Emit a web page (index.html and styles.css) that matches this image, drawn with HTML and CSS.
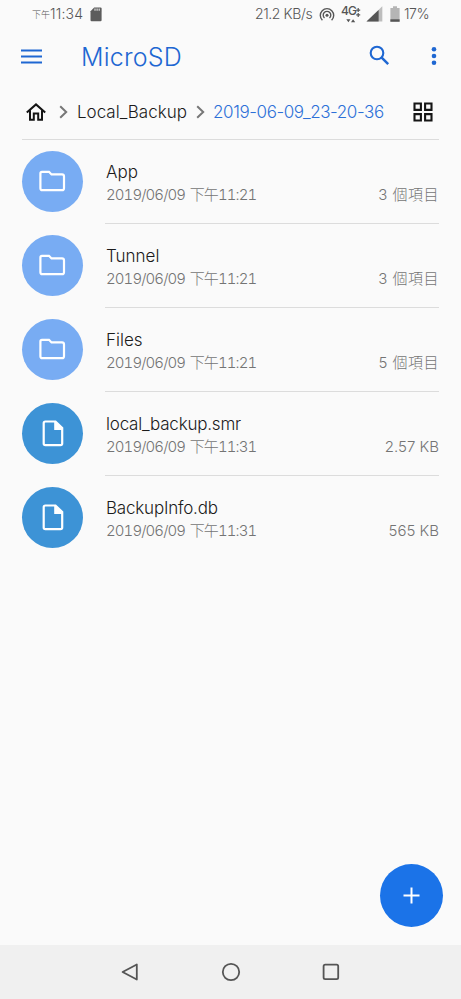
FILE: index.html
```html
<!DOCTYPE html>
<html lang="zh-Hant">
<head>
<meta charset="utf-8">
<title>MicroSD</title>
<link rel="stylesheet" href="styles.css">
</head>
<body>
<div class="status">
  <span class="ampm">下午</span><span class="clock">11:34</span>
  <svg class="sd" width="12" height="15" viewBox="0 0 12 15"><path fill="#5c5c5c" d="M4.2 0.5H10.5Q11.6 .5 11.6 1.6V13Q11.6 14.2 10.5 14.2H1.6Q.5 14.2 .5 13V4.2Z"/><path stroke="#ddd" stroke-width="1.2" d="M5 1.6v2.2M7.1 1.6v2.2M9.2 1.6v2.2"/></svg>
  <span class="speed">21.2 KB/s</span>
  <svg class="cast" width="16" height="15" viewBox="0 0 16 15" fill="none" stroke="#555" stroke-width="1.4"><path d="M3.4 13.2A6.7 6.7 0 1 1 12.6 13.2M5.5 11A3.8 3.8 0 1 1 10.5 11"/><circle cx="8" cy="8.2" r="1.5" fill="#555" stroke="none"/></svg>
  <span class="net"><span class="gen">4G</span><svg width="20" height="18" viewBox="0 0 20 18" fill="#555"><path d="M15.2 4.5h4v1.2h-4zM16.6 3h1.2v4h-1.2zM15.2 9.3h4v1.2h-4zM16.6 8h1.2v4h-1.2zM5.3 14.2h4.2L7.4 17.3zM10 17.3h4.2L12.1 14.2z"/></svg></span>
  <svg class="signal" width="17" height="16" viewBox="0 0 17 16"><path fill="#bdbdbd" d="M16.3 .3V15.5H.5Z"/><path fill="#555" d="M12.6 3.9V15.5H.5Z"/></svg>
  <svg class="battery" width="10" height="16" viewBox="0 0 10 16"><path fill="#b5b5b5" d="M3 .3h4v1.6h2.6v13.8H.4V1.9H3z"/><path fill="#555" d="M.4 13.3h9.2v2.4H.4z"/></svg>
  <span class="pct">17%</span>
</div>
<header class="appbar">
  <svg class="menu" width="21" height="15" viewBox="0 0 21 15"><path stroke="#1e67d2" stroke-width="2" d="M0 1.5h21M0 7.5h21M0 13.5h21"/></svg>
  <h1>MicroSD</h1>
  <svg class="search" width="21" height="21" viewBox="0 0 21 21" fill="none" stroke="#1e67d2" stroke-width="2.1"><circle cx="8" cy="8" r="6.3"/><path d="M12.7 12.7L19.2 19.2" stroke-width="2.5"/></svg>
  <svg class="more" width="6" height="20" viewBox="0 0 6 20" fill="#1e67d2"><circle cx="3" cy="3.2" r="2.3"/><circle cx="3" cy="10" r="2.3"/><circle cx="3" cy="16.8" r="2.3"/></svg>
</header>
<nav class="crumbs">
  <svg class="home" width="20" height="18" viewBox="0 0 20 18" fill="none" stroke="#151515" stroke-width="2"><path d="M.8 9.5L10 1.4L19.2 9.5M4 7.5V16.8H7.8V10.6H12.2V16.8H16V7.5"/></svg>
  <svg class="chev" width="9" height="14" viewBox="0 0 9 14" fill="none" stroke="#777" stroke-width="2"><path d="M1.2 1.2L7.2 7L1.2 12.8"/></svg>
  <span class="crumb">Local_Backup</span>
  <svg class="chev second" width="9" height="14" viewBox="0 0 9 14" fill="none" stroke="#777" stroke-width="2"><path d="M1.2 1.2L7.2 7L1.2 12.8"/></svg>
  <span class="crumb current">2019-06-09_23-20-36</span>
  <svg class="grid" width="20" height="20" viewBox="0 0 20 20" fill="none" stroke="#151515" stroke-width="2.1"><path d="M1.5 1.5h6.4v6.4H1.5zM12.1 1.5h6.4v6.4h-6.4zM1.5 12.1h6.4v6.4H1.5zM12.1 12.1h6.4v6.4h-6.4z"/></svg>
</nav>
<main class="list">
  <div class="row"><div class="disc"><svg width="27" height="22" viewBox="0 0 27 22" fill="none" stroke="#fff" stroke-width="2.2"><path d="M3 1.8H10L12.5 4.4H23Q25 4.4 25 6.4V18.2Q25 20.2 23 20.2H3.4Q1.4 20.2 1.4 18.2V3.4Q1.4 1.8 3 1.8Z"/></svg></div><div class="body"><div class="info"><div class="name">App</div><div class="date">2019/06/09 下午11:21</div></div><div class="size items">3 個項目</div></div></div>
  <div class="row"><div class="disc"><svg width="27" height="22" viewBox="0 0 27 22" fill="none" stroke="#fff" stroke-width="2.2"><path d="M3 1.8H10L12.5 4.4H23Q25 4.4 25 6.4V18.2Q25 20.2 23 20.2H3.4Q1.4 20.2 1.4 18.2V3.4Q1.4 1.8 3 1.8Z"/></svg></div><div class="body"><div class="info"><div class="name">Tunnel</div><div class="date">2019/06/09 下午11:21</div></div><div class="size items">3 個項目</div></div></div>
  <div class="row"><div class="disc"><svg width="27" height="22" viewBox="0 0 27 22" fill="none" stroke="#fff" stroke-width="2.2"><path d="M3 1.8H10L12.5 4.4H23Q25 4.4 25 6.4V18.2Q25 20.2 23 20.2H3.4Q1.4 20.2 1.4 18.2V3.4Q1.4 1.8 3 1.8Z"/></svg></div><div class="body"><div class="info"><div class="name">Files</div><div class="date">2019/06/09 下午11:21</div></div><div class="size items">5 個項目</div></div></div>
  <div class="row"><div class="disc file"><svg width="22" height="27" viewBox="0 0 22 27"><path fill="none" stroke="#fff" stroke-width="2.2" d="M3.4 1.5H13.5L20.2 8V23.5Q20.2 25.2 18.5 25.2H3.4Q1.7 25.2 1.7 23.5V3.2Q1.7 1.5 3.4 1.5Z"/><path fill="#fff" d="M12.2 1.5h1.6L20.5 8v2h-8.3z"/></svg></div><div class="body"><div class="info"><div class="name tight">local_backup.smr</div><div class="date">2019/06/09 下午11:31</div></div><div class="size">2.57 KB</div></div></div>
  <div class="row"><div class="disc file"><svg width="22" height="27" viewBox="0 0 22 27"><path fill="none" stroke="#fff" stroke-width="2.2" d="M3.4 1.5H13.5L20.2 8V23.5Q20.2 25.2 18.5 25.2H3.4Q1.7 25.2 1.7 23.5V3.2Q1.7 1.5 3.4 1.5Z"/><path fill="#fff" d="M12.2 1.5h1.6L20.5 8v2h-8.3z"/></svg></div><div class="body"><div class="info"><div class="name tight">BackupInfo.db</div><div class="date">2019/06/09 下午11:31</div></div><div class="size">565 KB</div></div></div>
</main>
<div class="fab"><svg width="17" height="17" viewBox="0 0 17 17"><path stroke="#fff" stroke-width="2" d="M8.5 .5v16M.5 8.5h16"/></svg></div>
<footer class="navbar">
  <svg width="20" height="20" viewBox="0 0 20 20"><path d="M16.8 2.5V17.5L2.6 10Z"/></svg>
  <svg width="20" height="20" viewBox="0 0 20 20"><circle cx="10" cy="10" r="8.2"/></svg>
  <svg width="20" height="20" viewBox="0 0 20 20"><rect x="2.6" y="2.6" width="14.6" height="14.6" rx="1.6"/></svg>
</footer>
</body>
</html>
```
FILE: styles.css
```css
* { box-sizing: border-box; }
body {
  margin: 0;
  height: 999px;
  display: flex;
  flex-direction: column;
  background: #fafafa;
  color: #1b1b1b;
  font-family: Inter, "Noto Sans CJK TC", sans-serif;
  font-weight: 300;
  overflow: hidden;
  white-space: nowrap;
}
svg { display: block; flex: none; }
.status {
  height: 28px;
  display: flex;
  align-items: center;
  padding-left: 32px;
  font-size: 14px;
  line-height: 20px;
  color: #555;
}
.ampm { width: 18px; font-size: 9px; padding-top: 2px; }
.clock { width: 40px; letter-spacing: 0.2px; }
.speed { margin-left: 153px; width: 64px; letter-spacing: -0.4px; }
.net { display: grid; margin-left: 6px; width: 20px; height: 18px; }
.net > * { grid-area: 1 / 1; }
.gen { font-size: 12px; line-height: 12px; font-weight: 500; letter-spacing: -0.8px; }
.signal { margin-left: 5px; }
.battery { margin-left: 7px; }
.pct { margin-left: 4px; letter-spacing: -0.4px; }
.appbar { height: 56px; display: flex; align-items: center; padding-left: 21px; }
h1 {
  margin: 2px 0 0 39px;
  width: 288px;
  font-size: 25px;
  line-height: 30px;
  font-weight: 300;
  letter-spacing: 0.2px;
  color: #1e67d2;
}
.search { margin-top: -1px; }
.more { margin-left: 41px; }
.crumbs {
  height: 56px;
  margin: 0 22px;
  padding-left: 4px;
  display: flex;
  align-items: center;
  border-bottom: 1px solid #dcdcdc;
  font-size: 17px;
}
.chev { margin-left: 13px; }
.crumb { margin-left: 9px; width: 110px; }
.chev.second { margin-left: 9px; }
.crumb.current { margin-left: 8px; width: 172px; letter-spacing: -0.4px; color: #2c70d8; }
.grid { margin-left: 28px; }
.row { height: 84px; padding: 0 22px; display: flex; align-items: center; }
.disc {
  width: 61px;
  height: 61px;
  margin-bottom: 2px;
  border-radius: 50%;
  background: #78acf3;
  display: flex;
  align-items: center;
  justify-content: center;
}
.disc.file { background: #3d93d6; }
.body {
  flex: 1;
  height: 84px;
  margin-left: 22px;
  padding: 21px 0 0 1px;
  display: flex;
  justify-content: space-between;
  border-bottom: 1px solid #dcdcdc;
}
.row:last-child .body { border-bottom-color: transparent; }
.name { font-size: 17px; line-height: 23px; }
.name.tight { letter-spacing: -0.2px; }
.date, .size { font-size: 15px; line-height: 22px; color: #747474; }
.date { font-variant-numeric: tabular-nums; letter-spacing: -0.9px; word-spacing: 1.5px; }
.size { padding-top: 23px; }
.size.items { letter-spacing: 0.5px; }
.fab {
  width: 63px;
  height: 63px;
  margin: auto 18px 18px auto;
  border-radius: 50%;
  background: #1b73e8;
  display: flex;
  align-items: center;
  justify-content: center;
}
.navbar {
  height: 54px;
  padding: 0 120px;
  background: #f0f0f0;
  display: flex;
  align-items: center;
  justify-content: space-between;
}
.navbar svg { fill: none; stroke: #555; stroke-width: 1.8; stroke-linejoin: round; }
```
